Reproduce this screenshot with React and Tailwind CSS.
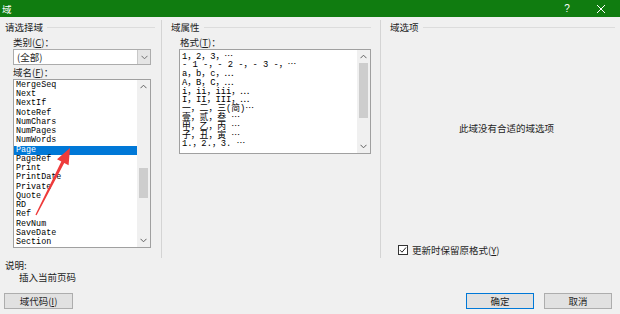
import React from "react";

const Chev = ({ dir = "down", color = "#606060" }) => (
  <svg width="7" height="5" viewBox="0 0 7 5">
    <path
      d={dir === "up" ? "M0.5 4.2 L3.5 1.2 L6.5 4.2" : "M0.5 0.8 L3.5 3.8 L6.5 0.8"}
      fill="none"
      stroke={color}
      strokeWidth="1"
    />
  </svg>
);

const fieldNames = [
  "MergeSeq",
  "Next",
  "NextIf",
  "NoteRef",
  "NumChars",
  "NumPages",
  "NumWords",
  "Page",
  "PageRef",
  "Print",
  "PrintDate",
  "Private",
  "Quote",
  "RD",
  "Ref",
  "RevNum",
  "SaveDate",
  "Section",
];

const formats = [
  "1，2，3，⋯",
  "- 1 -，- 2 -，- 3 -，⋯",
  "a，b，c，⋯",
  "A，B，C，⋯",
  "i，ii，iii，⋯",
  "I，II，III，⋯",
  "一，二，三(简)⋯",
  "壹，贰，叁 ⋯",
  "甲，乙，丙 ⋯",
  "子，丑，寅 ⋯",
  "1.，2.，3. ⋯",
];

function GroupHeader({ title, pl, mr }) {
  return (
    <div className={`flex items-center h-[14px] ${pl}`}>
      <span className="leading-[12px] whitespace-nowrap">{title}</span>
      <div className={`flex-1 h-px bg-[#dcdcdc] ml-[4px] ${mr}`} />
    </div>
  );
}

export default function App() {
  return (
    <div className="relative w-[620px] h-[314px] bg-[#f0f0f0] overflow-hidden text-[#1e1e1e] text-[9.5px] font-['Noto_Sans_CJK_SC','Liberation_Sans',sans-serif]">
      {/* Title bar */}
      <div className="h-[17px] bg-[#107c10] flex items-center text-white">
        <span className="ml-[2px] text-[9.5px] leading-[12px]">域</span>
        <span className="ml-auto w-[20px] text-center text-[10px] leading-[12px] font-['Liberation_Sans',sans-serif] font-light">?</span>
        <span className="ml-[14px] mr-[9px] w-[20px] flex justify-center">
          <svg width="10" height="10" viewBox="0 0 10 10">
            <path d="M1 1 L9 9 M9 1 L1 9" stroke="white" strokeWidth="1" />
          </svg>
        </span>
      </div>

      {/* Main area */}
      <div className="flex h-[241px] pt-[3px]">
        {/* Left column */}
        <div className="w-[161px] flex flex-col">
          <GroupHeader title="请选择域" pl="pl-[5px]" mr="mr-[6px]" />
          <div className="mt-[2px] h-[12px] pl-[13px] leading-[12px]">
            类别(<u>C</u>)：
          </div>
          <div className="mt-[1px] ml-[13px] w-[138px] h-[16px] bg-white border border-[#acacac] flex">
            <div className="flex-1 pl-[3px] leading-[14px]">(全部)</div>
            <div className="w-[13px] bg-[#e5e5e5] border-l border-[#c8c8c8] flex items-center justify-center">
              <Chev dir="down" color="#707070" />
            </div>
          </div>
          <div className="mt-[1px] h-[12px] pl-[13px] leading-[12px]">
            域名(<u>F</u>)：
          </div>
          <div className="mt-[1px] ml-[13px] w-[138px] h-[169px] bg-white border border-[#a0a0a0] flex">
            <div className="flex-1 pt-px font-['Liberation_Mono','Noto_Sans_CJK_SC',monospace] text-[8.4px]">
              {fieldNames.map((n) => (
                <div
                  key={n}
                  className={`h-[9.24px] leading-[9.24px] pl-[2px] whitespace-nowrap ${
                    n === "Page" ? "bg-[#0078d7] text-white" : "text-black"
                  }`}
                >
                  {n}
                </div>
              ))}
            </div>
            <div className="w-[13px] flex flex-col bg-[#f0f0f0]">
              <div className="h-[13px] flex items-center justify-center">
                <Chev dir="up" />
              </div>
              <div className="mt-[75px] mx-[2px] h-[30px] bg-[#cdcdcd]" />
              <div className="mt-auto h-[13px] flex items-center justify-center">
                <Chev dir="down" />
              </div>
            </div>
          </div>
        </div>

        <div className="w-px bg-[#d4d4d4]" />

        {/* Middle column */}
        <div className="w-[218px] flex flex-col">
          <GroupHeader title="域属性" pl="pl-[9px]" mr="mr-[9px]" />
          <div className="mt-[2px] h-[12px] pl-[18px] leading-[12px]">
            格式(<u>T</u>)：
          </div>
          <div className="mt-px ml-[17px] w-[192px] h-[105px] bg-white border border-[#a0a0a0] flex overflow-hidden">
            <div className="flex-1 pt-[2.5px] pl-[2px] font-['Liberation_Mono','Noto_Sans_CJK_SC',monospace] text-[8.8px] text-black overflow-hidden">
              {formats.map((f) => (
                <div key={f} className="h-[8.8px] leading-[8.8px] whitespace-nowrap">
                  {f}
                </div>
              ))}
            </div>
            <div className="w-[13px] flex flex-col bg-[#f0f0f0]">
              <div className="h-[13px] flex items-center justify-center">
                <Chev dir="up" />
              </div>
              <div className="mx-[2px] h-[55px] bg-[#cdcdcd]" />
              <div className="mt-auto h-[13px] flex items-center justify-center">
                <Chev dir="down" />
              </div>
            </div>
          </div>
        </div>

        <div className="w-px bg-[#d4d4d4]" />

        {/* Right column */}
        <div className="flex-1 flex flex-col pb-[2px]">
          <GroupHeader title="域选项" pl="pl-[9px]" mr="mr-[5px]" />
          <div className="mt-[88px] h-[12px] leading-[12px] pl-[17px] pr-[5px] text-center">
            此域没有合适的域选项
          </div>
          <div className="mt-auto h-[12px] pl-[17px] flex items-center">
            <div className="w-[10px] h-[10px] border border-[#333] bg-white flex items-center justify-center">
              <svg width="8" height="8" viewBox="0 0 8 8">
                <path d="M1 4.2 L3 6.2 L7 1.5" fill="none" stroke="#222" strokeWidth="1" />
              </svg>
            </div>
            <span className="ml-[4px] leading-[12px]">
              更新时保留原格式(<u>Y</u>)
            </span>
          </div>
        </div>
      </div>

      {/* Bottom */}
      <div className="flex flex-col">
        <div className="mt-px h-[12px] leading-[12px] pl-[5px]">说明:</div>
        <div className="h-[12px] leading-[12px] pl-[19px]">插入当前页码</div>
        <div className="mt-[10px] flex">
          <button className="ml-[4px] w-[69px] h-[16px] bg-[#e1e1e1] border border-[#adadad] leading-[14px] text-center">
            域代码(<u>I</u>)
          </button>
          <div className="ml-auto mr-[8px] flex gap-[10px]">
            <button className="w-[68px] h-[16px] bg-[#e1e1e1] border border-[#0078d7] leading-[14px] text-center">
              确定
            </button>
            <button className="w-[68px] h-[16px] bg-[#e1e1e1] border border-[#adadad] leading-[14px] text-center">
              取消
            </button>
          </div>
        </div>
      </div>

      {/* Red annotation arrow */}
      <svg
        className="absolute left-0 top-0 pointer-events-none"
        width="620"
        height="314"
        viewBox="0 0 620 314"
      >
        <polygon
          points="35.4,214.7 61.3,161.6 57,159.3 70,148 68.6,165.2 64.2,163 36.6,215.3"
          fill="#ee3b3b"
        />
      </svg>
    </div>
  );
}
